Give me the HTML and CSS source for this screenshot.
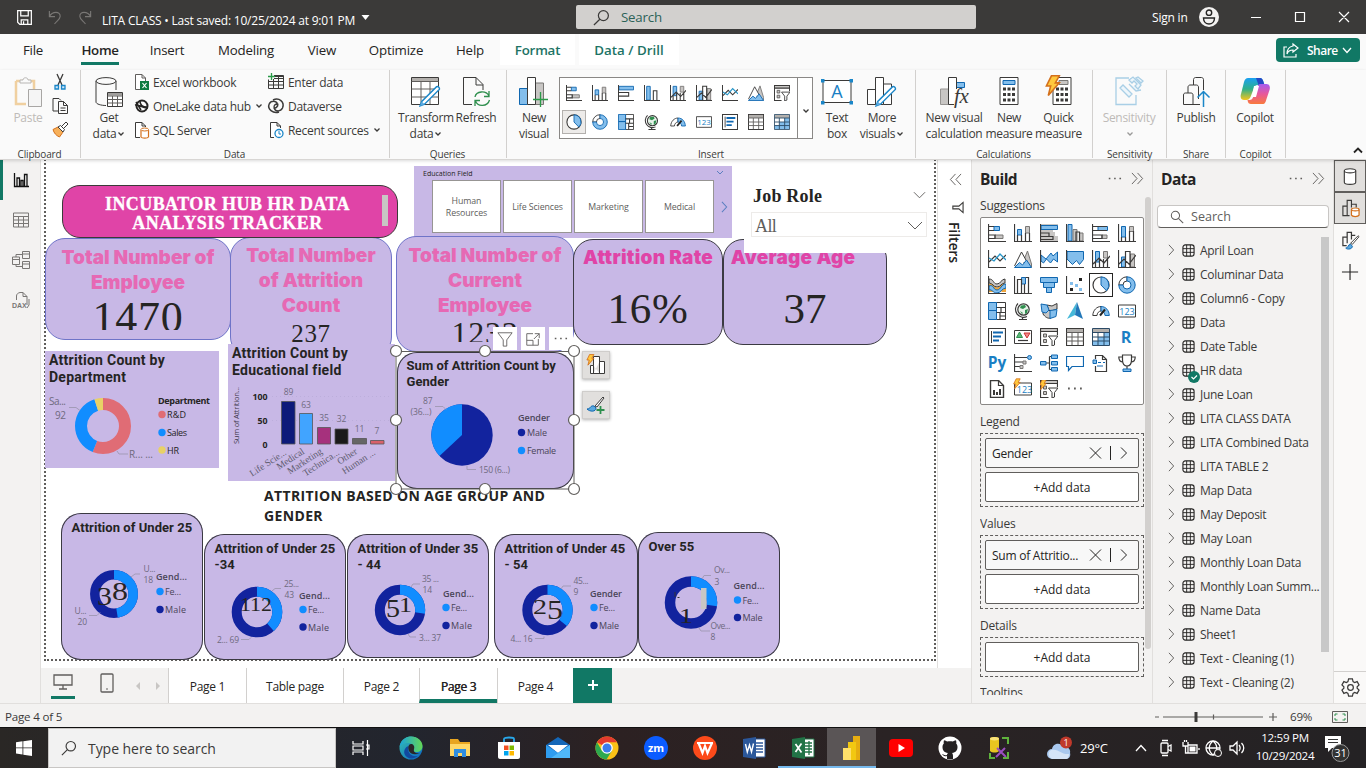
FILE: index.html
```html
<!DOCTYPE html>
<html lang="en">
<head>
<meta charset="utf-8">
<title>LITA CLASS</title>
<link rel="stylesheet" href="styles.css">
</head>
<body>
<svg class="defs" aria-hidden="true">
  <defs>
    <linearGradient id="cpA" x1="0" y1="0" x2="0" y2="1"><stop offset="0" stop-color="#1aa0f2"/><stop offset=".5" stop-color="#2fb08a"/><stop offset="1" stop-color="#f5c51c"/></linearGradient>
    <linearGradient id="cpB" x1="0" y1="0" x2="0" y2="1"><stop offset="0" stop-color="#a55bf0"/><stop offset=".5" stop-color="#e8589a"/><stop offset="1" stop-color="#f97a3c"/></linearGradient>
    <linearGradient id="edge" x1="0" y1="0" x2="1" y2="1"><stop offset="0" stop-color="#35c1b0"/><stop offset="1" stop-color="#0b62c4"/></linearGradient>
    <linearGradient id="edgeT" x1="0" y1="0" x2="1" y2="0"><stop offset="0" stop-color="#1aa2dc"/><stop offset="1" stop-color="#63d655"/></linearGradient>
  </defs>
  <symbol id="stackbar" viewBox="0 0 18 18"><path class="g" d="M7 11h8v3.500H7z"/><path class="b" d="M6 2.500h5.500v4H6z"/><path class="n" d="M.5 0v17.500H18M1 2.500h5M1 6.500h5M1 11h6v3.500H1"/></symbol>
  <symbol id="stackcol" viewBox="0 0 18 18"><path class="g" d="M11.500 2.500h4V9h-4z"/><path class="b" d="M3.500 5.500h4V11h-4z"/><path class="n" d="M.5 0v17.500H18M3.500 11v6M7.500 11v6M11.500 9v8M15.500 9v8"/></symbol>
  <symbol id="clubar" viewBox="0 0 18 18"><path class="b" d="M1 1.500h16.500v4H1z"/><path class="n" d="M.5 0v17.500H18M1 8.500h11v4H1"/></symbol>
  <symbol id="clucol" viewBox="0 0 18 18"><path class="b" d="M3 1.500h4V17H3z"/><path class="n" d="M.5 0v17.500H18M10.500 17V6.500h4V17"/></symbol>
  <symbol id="clubar2" viewBox="0 0 18 18"><path d="M0 0h18v5h-5v3h2v4h3v6H0z" fill="#c8c6c4"/><path class="b" d="M1 1.500h16.500v4H1z"/><path class="n" d="M.5 0v17.500H18M1 9h8v3.500H1M1 12.500h12v3H1"/></symbol>
  <symbol id="clucol2" viewBox="0 0 18 18"><path class="b" d="M2 .5h4V17H2z"/><path class="g" d="M7 5.500h4V17H7zM13.500 9h3.500v8h-3.500z"/><path class="n" d="M.5 0v17.500H18M10 17V8h3.500v9"/></symbol>
  <symbol id="hbar" viewBox="0 0 18 18"><path class="g" d="M10 11h5v3.500h-5z"/><path class="b" d="M6 2.500h9.500v4H6z"/><path class="n" d="M.5 0v17.500H18M1 2.500h14M1 6.500h14M1 11h9v3.500H1"/></symbol>
  <symbol id="hcol" viewBox="0 0 18 18"><path class="g" d="M11.500 2.500h4v5h-4z"/><path class="b" d="M3.500 2.500h4V13h-4z"/><path class="n" d="M.5 0v17.500H18M3.500 13v4M7.500 13v4M11.500 7v10M15.500 7v10"/></symbol>
  <symbol id="combo" viewBox="0 0 18 18"><path class="b" d="M3.500 1.500h4V12h-4z"/><path class="g" d="M11.500 1.500h4V8h-4z"/><path class="n" d="M.5 0v17.500H18M3.500 12v5M7.500 9v8M11.500 9v8M15.500 8v9M1 14l6-6 5 5 6-7"/></symbol>
  <symbol id="combo2" viewBox="0 0 18 18"><path class="b" d="M3.500 7h4v10h-4z"/><path class="g" d="M12.500 4h4v13h-4z"/><path class="n" d="M.5 0v17.500H18M7.500 17V1.500h4.500V17M1 14l5-5 5 5 7-9"/></symbol>
  <symbol id="line" viewBox="0 0 18 18"><path class="n" d="M.5 0v17.500H18M1 12l6-6 5 5 6-6"/><path d="M1 8l5 3 6-7 6 6" fill="none" stroke="#2796c8" stroke-width="1.300"/></symbol>
  <symbol id="area" viewBox="0 0 18 18"><path class="g" d="M9 12L13.500 1 17.500 14v3z"/><path d="M.5 16L7.500 2l5 9" fill="#fff" stroke="#3b3a39"/><path class="b" d="M.5 17.500l5-5 3 2.500 4-5 5 7.500z"/></symbol>
  <symbol id="sarea" viewBox="0 0 18 18"><path class="b" d="M1 5l5 4 5-6 2 3 4.500-4v10l-4-3-3 4-4-4-3 4-2.500-2z"/><path class="n" d="M.5 0v17.500H18"/></symbol>
  <symbol id="farea" viewBox="0 0 18 18"><path class="b" d="M1 1.500h16.500v8l-4 5-3-4-4 4L1 9z"/><path class="n" d="M.5 0v17.500H18"/></symbol>
  <symbol id="ribbon" viewBox="0 0 18 18"><path d="M1 8h4l4 4 4-4h5v8h-4l-3-2-3 2H1z" fill="#f0a63c"/><path class="b" d="M1 10c5-2 4 4 8 4s4-6 9-6v4c-4 0-5 5-9 5s-5-4-8-3z"/><path d="M1 3c5 0 4 5 8 5s4-5 8-5v4c-4 0-4 4-8 4S5 7 1 7z" fill="#c8c6c4" stroke="#3b3a39"/><path class="n" d="M.5 0v17.500H18"/></symbol>
  <symbol id="wfall" viewBox="0 0 18 18"><path class="b" d="M7.500 1.500h4V8h-4z"/><path class="n" d="M.5 0v17.500H18M3.500 17V3.500h4V17M11.500 1.500h3V17M10.500 17V8"/></symbol>
  <symbol id="funnel" viewBox="0 0 18 18"><path class="b" d="M.5 1.500h17v5H.5zM3.500 6.500h11v5h-11zM6.500 11.500h5v5h-5z"/></symbol>
  <symbol id="scatter" viewBox="0 0 18 18"><path class="n" d="M.5 0v17.500H18"/><path fill="#83beec" d="M4 6h3v3H4zM9 8h3v3H9zM13 12h3v3h-3z"/><path fill="#252423" d="M13 2h3v3h-3zM4 12h3v3H4z"/></symbol>
  <symbol id="pie" viewBox="0 0 18 18"><circle cx="9" cy="9" r="8" fill="#fff" stroke="#3b3a39" stroke-width="1.200"/><path class="b" d="M9 1a8 8 0 0 1 5.500 13.700L9 9z"/></symbol>
  <symbol id="donut" viewBox="0 0 18 18"><path d="M9 .8A8.200 8.200 0 0 0 .8 9H5a4 4 0 0 1 4-4z" fill="#fff" stroke="#3b3a39"/><path class="b" d="M9 .8A8.200 8.200 0 1 1 .8 9H5a4 4 0 1 0 4-4z"/></symbol>
  <symbol id="tree" viewBox="0 0 18 18"><path d="M8.500.5h9v17h-9z" fill="#fff" stroke="#3b3a39"/><path class="b" d="M.5.500h8v8h-8zM.5 8.500h8v9h-8z"/><path class="n" d="M8.500 5.500h9M8.500 10.500h9M13 5.500v5M12 10.500v7M12 14h5"/></symbol>
  <symbol id="globe" viewBox="0 0 18 18"><circle cx="9.500" cy="7.500" r="5.700" fill="#e8f3ea" stroke="#3b3a39" stroke-width="1.200"/><path d="M7 3.500l4-.5 1 2-3 2-3-1zM11 8l3-1-1 4-2 1zM6 9l3 2-1 1z" fill="#2f8f4e"/><path class="n" d="M4 1.500a8 8 0 0 0 9 13M8.500 15v2.500M5 17.500h8"/></symbol>
  <symbol id="map" viewBox="0 0 18 18"><path d="M7 3l5 1 5-2.500V7l-6 2-2 0z" fill="#c8c6c4" stroke="#3b3a39"/><path d="M3 9l5-1 3 1v7c-3 1-6-1-8-4z" fill="#c8c6c4" stroke="#3b3a39"/><path class="b" d="M1 2l6 1 2 5-3 3-4-1z"/><path class="b" d="M10 8.500l7-1-1 7-6 2z"/></symbol>
  <symbol id="arrow" viewBox="0 0 18 18"><path d="M11 0L1 17l8-4z" fill="#46b8d8"/><path d="M11 0l6 17-8-4z" fill="#2277b8"/></symbol>
  <symbol id="gauge" viewBox="0 0 18 18"><path d="M.8 13.500C1 8 5 4.500 9 4.500V9c-2 0-4 2-4 4.500z" fill="#fff" stroke="#3b3a39"/><path class="b" d="M9 4.500c5 0 8 4 8.300 9H13C13 11 11 9 9 9z"/><path d="M8 13.500l5-6" stroke="#252423" stroke-width="2"/></symbol>
  <symbol id="frame" viewBox="0 0 18 18"><path d="M.5 3h17v12H.5z" fill="#fff" stroke="#3b3a39"/></symbol>
  <symbol id="mrow" viewBox="0 0 18 18"><path d="M.5.500h17v17H.5z" fill="#fff" stroke="#3b3a39" stroke-width="1.200"/><path d="M3.500 3v12" stroke="#3b3a39"/><path d="M5 4.500h10M5 8.500h8M5 12.500h6" stroke="#1067b0" stroke-width="2"/></symbol>
  <symbol id="kpi" viewBox="0 0 18 18"><path d="M.5 2.500h17v13H.5z" fill="#fff" stroke="#3b3a39"/><path d="M2.500 9.500L5.500 4l3 5.500z" fill="#5cb878" stroke="#2f8f4e"/><path d="M10 5h6l-3 5z" fill="#f28b8b" stroke="#c33"/><path class="n" d="M4 12.500h10"/></symbol>
  <symbol id="slicer" viewBox="0 0 18 18"><path d="M.5.500h17v3H.5z" fill="#c8c6c4"/><path class="n" d="M.5.500h17v3H.5zM.5 4v13.500h8M17.500 4v3"/><path d="M3.500 6h3v3h-3zM3.500 11.500h3v3h-3z" fill="#c8c6c4" stroke="#605e5c"/><path d="M8.500 8h9.500l-3.500 4.500V17l-2.500 1v-5.500z" fill="#fff" stroke="#3b3a39"/></symbol>
  <symbol id="table" viewBox="0 0 18 18"><path d="M.5.500h17v17H.5z" fill="#fff" stroke="#3b3a39" stroke-width="1.200"/><path d="M1 1h16v3.500H1z" fill="#b3b0ad"/><path d="M.5 4.500h17M.5 9h17M.5 13h17M6 4.500V17M12 4.500V17" stroke="#605e5c" fill="none"/></symbol>
  <symbol id="matrix" viewBox="0 0 18 18"><path d="M.5.500h17v17H.5z" fill="#fff"/><path d="M1 13h16v4H1zM12 4.500h5V13h-5zM6 9h6v4H6z" fill="#83beec"/><path d="M1 1h16v3.500H1z" fill="#b3b0ad"/><path d="M.5.500h17v17H.5zM.5 4.500h17M.5 9h17M.5 13h17M6 4.500V17M12 4.500V17" stroke="#2b4a66" fill="none"/></symbol>
  <symbol id="infl" viewBox="0 0 18 18"><path class="n" d="M.5 0v17.500H18M1 3.500h12M1 8h8M1 12.500h5"/><circle cx="15.500" cy="3.500" r="2" class="b"/><path class="g" d="M9 7h3v3H9zM6 11.500h3v3H6z"/></symbol>
  <symbol id="decomp" viewBox="0 0 18 18"><path class="n" d="M6 9h4M9.500 2.500v13M9.500 2.500h2M9.500 15.500h2"/><path class="b" d="M.5 7.500h5.500v3.500H.5zM11.500 1h6v3.500h-6zM11.500 7.500h6v3.500h-6zM11.500 13.500h6V17h-6z"/></symbol>
  <symbol id="qa" viewBox="0 0 18 18"><path d="M.5 2.500h17v10H6L2.500 16.500v-4h-2z" fill="#fff" stroke="#1067b0" stroke-width="1.200"/></symbol>
  <symbol id="narr" viewBox="0 0 18 18"><path class="n" d="M3.500 5V1.500h7l4 4v12h-11V12M10.500 1.500v4h4"/><path class="b" d="M1 6h3.500v3.500H1z"/><path d="M6 8.500h3M5 12h6M11 8.500h2" stroke="#1067b0"/></symbol>
  <symbol id="trophy" viewBox="0 0 18 18"><path class="n" d="M4.500 1h9v5c0 4-2 6-4.500 6S4.500 10 4.500 6zM4.500 3H.8c0 4 1.700 5 4.200 5M13.500 3h3.700c0 4-1.700 5-4.200 5M9 12v3"/><path class="b" d="M5 15h8v2.500H5z"/></symbol>
  <symbol id="report" viewBox="0 0 18 18"><path d="M2.500.500h8l5 5v12h-13z" fill="#fff" stroke="#3b3a39" stroke-width="1.400"/><path d="M10.500.500v5h5" class="n"/><path d="M6 10v5M9 12v3M12 9v6" stroke="#3b3a39" stroke-width="2"/></symbol>
  <symbol id="bolt" viewBox="0 0 10 14"><path d="M4 .5h5L6.500 5H9L2 13l1.500-6H.8z" fill="#ffc83d" stroke="#d4701c"/></symbol>
  <symbol id="slicer-n" viewBox="0 0 18 18"><use href="#slicer"/><use href="#bolt" x="-1" y="-1" width="8" height="12"/></symbol>
  <symbol id="dots" viewBox="0 0 18 18"><path d="M2 8.500h1.800M8 8.500h1.800M14 8.500h1.800" stroke="#605e5c" stroke-width="1.800"/></symbol>
  <symbol id="dn" viewBox="0 0 8 8"><path d="M1.500 2.500L4 5l2.500-2.500" fill="none" stroke="#3b3a39" stroke-width="1.300"/></symbol>
  <symbol id="chev" viewBox="0 0 8 14"><path d="M1 1l5.500 6L1 13" fill="none" stroke="#605e5c" stroke-width="1.100"/></symbol>
  <symbol id="dbl" viewBox="0 0 14 14"><path d="M1 1l5.500 6L1 13M7 1l5.500 6L7 13" fill="none" stroke="#605e5c"/></symbol>
  <symbol id="tbl" viewBox="0 0 14 14"><rect x="1" y="1" width="12" height="12" rx="2.500" fill="none" stroke="#252423" stroke-width="1.200"/><path d="M1 5h12M1 9h12M5 1v12M9 1v12" stroke="#252423" fill="none"/></symbol>
  <symbol id="glass" viewBox="0 0 18 18"><circle cx="11" cy="7" r="5.300" fill="none" stroke="currentColor" stroke-width="1.300"/><path d="M7.200 10.800L1 17" stroke="currentColor" stroke-width="1.300"/></symbol>
  <symbol id="pencil" viewBox="0 0 20 20"><path d="M16 1.500a2 2 0 0 1 2.500 2.500L5 17.500 1 19l1.500-4z" fill="#fff" stroke="#1a86c8" stroke-width="1.300"/><path d="M2.500 15L5 17.500 1 19z" fill="#5aa9e0"/></symbol>
</svg>

<header class="titlebar">
  <svg class="i-save" viewBox="0 0 16 16"><path d="M.7.700h14.600v14.600H3L.7 13zM4 .7v5.500h8V.7M4.500 15v-4.500h7V15M7 12v3" fill="none" stroke="#fff" stroke-width="1.300"/></svg>
  <svg class="i-undo" viewBox="0 0 14 16"><path d="M1 1v6h6M1 7C4 1 13 1 12.500 7c0 3-4 5-6 8" fill="none" stroke="#797775" stroke-width="1.200"/></svg>
  <svg class="i-redo" viewBox="0 0 14 16"><path d="M13 1v6H7M13 7C10 1 1 1 1.500 7c0 3 4 5 6 8" fill="none" stroke="#797775" stroke-width="1.200"/></svg>
  <span class="doc">LITA CLASS • Last saved: 10/25/2024 at 9:01 PM</span>
  <svg class="i-tri" viewBox="0 0 8 5"><path d="M0 0h8L4 5z" fill="#fff"/></svg>
  <div class="topsearch"><svg viewBox="0 0 18 18"><use href="#glass"/></svg><span>Search</span></div>
  <span class="signin">Sign in</span>
  <svg class="i-user" viewBox="0 0 20 20"><circle cx="10" cy="10" r="10" fill="#f3f2f1"/><circle cx="10" cy="5.700" r="2.700" fill="none" stroke="#252423" stroke-width="1.400"/><path d="M4.500 11h11c0 8-11 8-11 0z" fill="none" stroke="#252423" stroke-width="1.400"/></svg>
  <svg class="i-win" viewBox="0 0 100 12"><path d="M1 6.500h10M45.500 1.500h9v9h-9zM89 1l10 10M99 1L89 11" fill="none" stroke="#fff" stroke-width="1.200"/></svg>
</header>

<nav class="tabs">
  <span class="tab file">File</span><span class="tab home">Home</span><span class="tab insert">Insert</span><span class="tab modeling">Modeling</span><span class="tab view">View</span><span class="tab optimize">Optimize</span><span class="tab help">Help</span><span class="tab ctx format">Format</span><span class="tab ctx drill">Data / Drill</span>
  <button class="share"><svg class="i-share" viewBox="0 0 16 15"><path d="M4 4H1v10h12v-3M10 1l5 4-5 4V7C7 7 5 8 4 11c0-5 3-7.500 6-8z" fill="none" stroke="#fff" stroke-width="1.200"/></svg><span>Share</span><svg class="i-sdn" viewBox="0 0 10 7"><path d="M1 1l4 4.500L9 1" fill="none" stroke="#fff" stroke-width="1.300"/></svg></button>
</nav>

<section class="ribbon">
  <div class="group clip">
    <div class="row">
      <div class="big w50 off"><svg class="ic" viewBox="0 0 28 30"><path d="M2 4h18v8M12 27H2V4" fill="none" stroke="#f0d0a0" stroke-width="2.500"/><path d="M6 6V3h3c0-3 5-3 5 0h3v3z" fill="#fafafa" stroke="#b8b6b4"/><path d="M14.500 12.500h13v17h-13z" fill="#f5f5f5" stroke="#a8a6a4"/></svg><span>Paste</span></div>
      <div class="minis">
        <svg viewBox="0 0 16 18"><path d="M5 1l5 11M11 1L6 12" stroke="#3b3a39" fill="none" stroke-width="1.300"/><path d="M3 12.500h3.500V16H3zM9.500 12.500H13V16H9.500z" fill="#cfe6f8" stroke="#1a86c8" stroke-width="1.300"/></svg>
        <svg viewBox="0 0 16 18"><path d="M6 14H1V1.500h6l2 2M6.500 4.500h5l4 4v8h-9zM11.500 4.500v4h4M8.500 11h5M8.500 13.500h5" fill="none" stroke="#3b3a39"/></svg>
        <svg viewBox="0 0 16 18"><path d="M1 8.500l5-2.500 5 5-3.500 5C4 14.500 2 12 1 8.500z" fill="#f7b05a" stroke="#d4701c"/><path d="M6 6l2.500-1.500 4 4L11 11zM9.500 5.500L14 1l2 2-4.500 4.500" fill="#fff" stroke="#3b3a39"/></svg>
      </div>
    </div><label>Clipboard</label>
  </div>
  <div class="group data">
    <div class="row">
      <div class="big w50"><svg class="ic" viewBox="0 0 28 30"><path d="M1 4v21c0 2 5 3.500 10 3.500M21 4v9" stroke="#3b3a39" fill="none"/><ellipse cx="11" cy="4" rx="10" ry="3.400" fill="#fafafa" stroke="#3b3a39"/><path d="M12.500 15.500h15v14h-15z" fill="#fff" stroke="#3b3a39"/><path d="M13 16h14v2.500H13z" fill="#a19f9d"/><path d="M12.500 19h15M12.500 22.500h15M12.500 26h15M17.500 19v10M22.500 19v10" stroke="#605e5c" fill="none"/></svg><span>Get<br>data<svg class="dn"><use href="#dn"/></svg></span></div>
      <div class="links l1">
        <div><svg viewBox="0 0 16 18"><path d="M6 16.500H1.500v-15H8l3.500 3.500v3M8 1.500V5h3.500" fill="#fff" stroke="#605e5c"/><path d="M6 8h9v9H6z" fill="#107c41"/><path d="M8.500 10l4 5M12.500 10l-4 5" stroke="#fff" stroke-width="1.200"/></svg>Excel workbook</div>
        <div><svg viewBox="0 0 16 18"><circle cx="8" cy="9" r="5.500" fill="none" stroke="#252423" stroke-width="2"/><path d="M1 8c4-1 6 3 13 3M6 4c0 4 3 6 7 6M2 5l5 8" stroke="#252423" fill="none" stroke-width="1.500"/></svg>OneLake data hub<svg class="dn"><use href="#dn"/></svg></div>
        <div><svg viewBox="0 0 16 18"><path d="M6 16.500H1.500v-15H8l3.500 3.500v1M8 1.500V5h3.500" fill="#fff" stroke="#3b3a39"/><path d="M7 9v7c1 1.500 6.500 1.500 7.500 0V9" fill="#fff" stroke="#d4701c" stroke-width="1.200"/><ellipse cx="10.700" cy="8.500" rx="3.800" ry="1.500" fill="#fff" stroke="#d4701c"/></svg>SQL Server</div>
      </div>
      <div class="links l2">
        <div><svg viewBox="0 0 16 18"><path d="M6 2.500h9.500v13H.5v-9M6 3.500h9M.5 8.500h15M.5 12h15M5.500 6v10M10.500 4v12M6 5.500h9.500" fill="none" stroke="#3b3a39"/><path d="M3.500 0v7M0 3.500h7" stroke="#2a9a48" stroke-width="1.300"/></svg>Enter data</div>
        <div><svg viewBox="0 0 16 18"><path d="M11 15C5 17-1 12 1.200 7 3 3 8 3.500 9.300 6.500 10.500 9 8 12 5.500 10.500M5 3c6-3 12 2 9.500 8-2 4-7 3.500-8.200.5C5 8.500 8 6 10.500 7.500" fill="none" stroke="#3b3a39" stroke-width="1.500"/></svg>Dataverse</div>
        <div><svg viewBox="0 0 16 18"><path d="M6 16.500H2.500v-15H9l3.500 3.500v2M9 1.500V5h3.500" fill="#fff" stroke="#3b3a39"/><circle cx="11" cy="12.500" r="4" fill="#fff" stroke="#1a86c8" stroke-width="1.300"/><path d="M11 10v3h2" fill="none" stroke="#1a86c8"/></svg>Recent sources<svg class="dn"><use href="#dn"/></svg></div>
      </div>
    </div><label>Data</label>
  </div>
  <div class="group queries">
    <div class="row">
      <div class="big w60"><svg class="ic w30" viewBox="0 0 30 30"><path d="M.5.500h27v27H.5z" fill="#fff" stroke="#3b3a39"/><path d="M1 1h26v3.500H1z" fill="#b3b0ad"/><path d="M.5 4.500h27M.5 12h27M.5 20h27M10 5v22M19 5v22" stroke="#605e5c" fill="none"/><use href="#pencil" x="8" y="8" width="22" height="22"/></svg><span>Transform<br>data<svg class="dn"><use href="#dn"/></svg></span></div>
      <div class="big w40"><svg class="ic" viewBox="0 0 28 30"><path d="M10 27.500H1.500V.5H14l7 7V13M14 .5V8h7" fill="none" stroke="#3b3a39"/><path d="M13 20c1-6 11-7 14-1M27 14v5.500h-5M27.500 23c-2 7-12 7-14 1M13 29v-5.500h5" fill="none" stroke="#2f8f4e" stroke-width="1.300"/></svg><span>Refresh</span></div>
    </div><label>Queries</label>
  </div>
  <div class="group ins">
    <div class="row">
      <div class="big w40"><svg class="ic w30" viewBox="0 0 30 30"><path class="b" d="M.5 11.500h8v16h-8z"/><path class="g" d="M16.500 6h8v21.500h-8z"/><path d="M8.500.5h8v27h-8z" fill="#fff" stroke="#3b3a39"/><path d="M21.500 15v15M14 22.500h15" stroke="#2a9a48" stroke-width="1.300"/></svg><span>New<br>visual</span></div>
      <div class="gallery">
        <div class="ggrid">
          <i><svg><use href="#stackbar"/></svg></i><i><svg><use href="#stackcol"/></svg></i><i><svg><use href="#clubar"/></svg></i><i><svg><use href="#clucol"/></svg></i><i><svg><use href="#combo"/></svg></i><i><svg><use href="#combo2"/></svg></i><i><svg><use href="#line"/></svg></i><i><svg><use href="#area"/></svg></i><i><svg><use href="#slicer"/></svg></i>
          <i class="sel"><svg><use href="#pie"/></svg></i><i><svg><use href="#donut"/></svg></i><i><svg><use href="#tree"/></svg></i><i><svg><use href="#globe"/></svg></i><i><svg><use href="#gauge"/></svg></i><i><svg viewBox="0 0 18 18"><use href="#frame"/><text x="9" y="12.500" text-anchor="middle" font-size="9" class="t123">123</text></svg></i><i><svg><use href="#mrow"/></svg></i><i><svg><use href="#table"/></svg></i><i><svg><use href="#matrix"/></svg></i>
        </div>
        <div class="gdn"><svg class="dn"><use href="#dn"/></svg></div>
      </div>
      <div class="big w40 tbx"><svg class="ic w32" viewBox="0 0 32 30"><path d="M2 3.500h28v22H2z" fill="#fff" stroke="#3b3a39"/><path d="M0 2h3.500v3.500H0zM28.500 2H32v3.500h-3.500zM0 24h3.500v3.500H0zM28.500 24H32v3.500h-3.500z" fill="#1a86c8"/><text x="16" y="21" font-size="18" text-anchor="middle" class="t123">A</text></svg><span>Text<br>box</span></div>
      <div class="big w50"><svg class="ic w30" viewBox="0 0 30 30"><path d="M.5 12.500h8v15h-8zM16.500 7h8v20.500h-8z" fill="#fff" stroke="#3b3a39"/><path d="M8.500.5h8v27h-8z" fill="#fff" stroke="#3b3a39"/><use href="#pencil" x="8" y="8" width="22" height="22"/></svg><span>More<br>visuals<svg class="dn"><use href="#dn"/></svg></span></div>
    </div><label>Insert</label>
  </div>
  <div class="group calc">
    <div class="row">
      <div class="big w60"><svg class="ic w30" viewBox="0 0 30 30"><path d="M1.500 12h8v15.500h-8z" fill="#c8c6c4" stroke="#979593"/><path class="b" d="M17.500 5.500h8v5h-8z"/><path d="M15 27.500H9.500V.5h8V12" fill="#fff" stroke="#3b3a39"/><text x="15" y="26" font-size="21" font-style="italic" class="fx">fx</text></svg><span>New visual<br>calculation</span></div>
      <div class="big w50"><svg class="ic" viewBox="0 0 28 30"><path d="M5 .5h18v27H5z" fill="#fff" stroke="#3b3a39"/><path class="b" d="M8 3.500h12v4H8z"/><path d="M8 12h12M8 17.500h12M8 23h12" stroke="#3b3a39" stroke-width="3" stroke-dasharray="3 1.500"/></svg><span>New<br>measure</span></div>
      <div class="big w49"><svg class="ic" viewBox="0 0 28 30"><path d="M8 .5h18v27H8z" fill="#fff" stroke="#3b3a39"/><path class="g" d="M14 3.500h9v4h-9z"/><path d="M11 12h12M11 17.500h12M11 23h12" stroke="#3b3a39" stroke-width="3" stroke-dasharray="3 1.500"/><use href="#bolt" x="0" y="-2" width="16" height="22"/></svg><span>Quick<br>measure</span></div>
    </div><label>Calculations</label>
  </div>
  <div class="group sens">
    <div class="row"><div class="big w72 off"><svg class="ic" viewBox="0 0 28 30"><path d="M14 1H1v26.500h20V18" fill="none" stroke="#a9cfe6" stroke-width="1.300"/><path d="M5 11l3-3 9 9-3 3zM14 7l7 7 5-1M14 3l4-3 8 8-3 4-3-3 2-2-3-3-2 2zM21 1l5 5 2-2-5-4z" fill="#eef6fb" stroke="#a9cfe6" stroke-width="1.300"/></svg><span>Sensitivity<br><svg class="dn"><use href="#dn"/></svg></span></div></div><label>Sensitivity</label>
  </div>
  <div class="group pub">
    <div class="row"><div class="big w58"><svg class="ic" viewBox="0 0 28 30"><path d="M18 27.500H1.500V18c0-1.500 1-2 2-2H6V10c0-1 1-2 2-2h3.500V2.500c0-1 1-2 2-2h6c1 0 2 1 2 2V13M6 16h3c1.500 0 2 1 2 2v9.500M11.500 8h3c1 0 2 1 2 2v12" fill="none" stroke="#3b3a39"/><path d="M21.500 30V15M15.500 20.500l6-6 6 6" fill="none" stroke="#1a86c8" stroke-width="1.500"/></svg><span>Publish</span></div></div><label>Share</label>
  </div>
  <div class="group cop">
    <div class="row"><div class="big w58"><svg class="ic w30" viewBox="0 0 30 30"><path d="M8 1h12c2 0 3 2 3.500 4l1 3h-7c-2 0-3 1-4 4l-3 8c-1 2-2 3-4 3H4c-3 0-4-3-3-6L4 5c1-3 2-4 4-4z" fill="url(#cpA)"/><path d="M16 1h4c2 0 3 2 3.500 4l1 3h-6z" fill="#2449c4"/><path d="M23 27H11c-2 0-3-1-3.500-4h2c2 0 3-1 4-4l3-8c1-2 2-4 4-4h6c3 0 4 3 3 6L26.500 22c-1 4-2 5-3.500 5z" fill="url(#cpB)"/><path d="M14 9h5l-3 11h-4z" fill="#fff"/></svg><span>Copilot</span></div></div><label>Copilot</label>
  </div>
  <svg class="collapse" viewBox="0 0 10 7"><path d="M1 5.500L5 1.500l4 4" fill="none" stroke="#252423" stroke-width="1.800"/></svg>
</section>

<main class="main">
  <aside class="rail">
    <div class="on"><svg viewBox="0 0 18 18"><path d="M2.500 2v13.500H17M5 15V7h2.500v8M9 15V9.500h2V15M12.500 15V3.500H15V15" fill="none" stroke="#111" stroke-width="1.300"/></svg></div>
    <div><svg viewBox="0 0 18 18"><path d="M1.500 2h15v14h-15zM1.500 5.500h15M1.500 9h15M1.500 12.500h15M6.500 5.500V16M11.500 5.500V16" fill="none" stroke="#797775"/></svg></div>
    <div><svg viewBox="0 0 18 18"><path d="M.5 6h7v7.500h-7zM.5 8.500h7M10.500.5h7v7h-7zM10.500 3h7M10.500 10.500h7v7h-7zM10.500 13h7M4 6V3.500h6.500M4 13.500v2h6.500" fill="none" stroke="#797775"/></svg></div>
    <div><svg viewBox="0 0 18 18"><path d="M4.500 9V5C4.500 3 6 2 8 1.500h3l4 4V14M11 1.500v4h4M17 8v6l-2 3" fill="none" stroke="#797775"/><text x="0" y="16.500" font-size="7" font-weight="700" class="dax">DAX</text></svg></div>
  </aside>

  <div class="work">
    <div class="canvas">
      <div class="page"></div>
      <div class="v kpi k1"><h3>Total Number of<br>Employee</h3><b>1470</b></div>
      <div class="v kpi k2"><h3>Total Number<br>of Attrition<br>Count</h3><b>237</b></div>
      <div class="v title">INCUBATOR HUB HR DATA<br>ANALYSIS TRACKER<i></i></div>
      <div class="v edu"><div class="eh"><span>Education Field</span><svg viewBox="0 0 8 6"><path d="M1 1l3 3 3-3" fill="none" stroke="#5b7fc0"/></svg></div><div class="tiles"><span>Human Resources</span><span>Life Sciences</span><span>Marketing</span><span>Medical</span></div><svg class="next" viewBox="0 0 8 14"><path d="M1 1l5.500 6L1 13" fill="none" stroke="#5b7fc0" stroke-width="1.200"/></svg></div>
      <div class="v kpi k3"><h3>Total Number of<br>Current<br>Employee</h3><b>1233</b></div>
      <div class="v kpi dark k4"><h3>Attrition Rate</h3><b>16%</b></div>
      <div class="v kpi dark k5"><h3>Average Age</h3><b>37</b></div>
      <div class="v role"><div class="rh"><strong>Job Role</strong><svg viewBox="0 0 14 8"><path d="M1 1l6 6 6-6" fill="none" stroke="#605e5c"/></svg></div><div class="rs"><span>All</span><svg viewBox="0 0 16 9"><path d="M1 1l7 7 7-7" fill="none" stroke="#605e5c"/></svg></div></div>

      <div class="v chart dept"><h4>Attrition Count by<br>Department</h4>
        <svg viewBox="45 351 174 117"><g transform="rotate(-90 103 426)" fill="none" stroke-width="12"><circle cx="103" cy="426" r="22" stroke="#e06c75" pathLength="100" stroke-dasharray="56 100"/><circle cx="103" cy="426" r="22" stroke="#118dff" pathLength="100" stroke-dasharray="39 100" stroke-dashoffset="-56"/><circle cx="103" cy="426" r="22" stroke="#e8d166" pathLength="100" stroke-dasharray="5 100" stroke-dashoffset="-95"/></g>
          <path d="M69 407.500h7l4 3M117 451l2 3h9" fill="none" stroke="#a39bb8"/>
          <g class="lab"><text x="49" y="405" font-size="10" textLength="17">Sa...</text><text x="55" y="419" font-size="10" textLength="11">92</text><text x="129" y="458" font-size="10" textLength="24">R... ...</text></g>
          <text x="158" y="404" font-size="10" class="lgb k" textLength="52">Department</text>
          <circle cx="162" cy="414.500" r="3.700" fill="#e06c75"/><circle cx="162" cy="432.500" r="3.700" fill="#118dff"/><circle cx="162" cy="450" r="3.700" fill="#e8d166"/>
          <g class="lg k"><text x="167" y="418" textLength="19">R&amp;D</text><text x="167" y="436" textLength="20">Sales</text><text x="167" y="454" textLength="12">HR</text></g></svg></div>

      <div class="v chart field"><h4>Attrition Count by<br>Educational field</h4>
        <svg viewBox="228 344 167 137"><path d="M272 396.500h118M272 420.500h118" stroke="#bcaedb" stroke-dasharray="1 3"/>
          <g stroke="#555" stroke-width=".8"><path d="M281.500 401.500h13.500V444h-13.500z" fill="#0d1a7a"/><path d="M299.500 413.500h13V444h-13z" fill="#41a4ff"/><path d="M317.500 427.500h13V444h-13z" fill="#a6317d"/><path d="M335 429h13v15h-13z" fill="#1a1a1a"/><path d="M352.500 438.500h14v5.500h-14z" fill="#666"/><path d="M370.500 440.500h13.500v3.500h-13.500z" fill="#d9616b"/></g>
          <g class="lab mid" font-size="8.500"><text x="288.500" y="395">89</text><text x="306" y="407.500">63</text><text x="324" y="420.500">35</text><text x="341.500" y="422">32</text><text x="359.500" y="432">11</text><text x="377" y="434">7</text></g>
          <g class="ax"><text x="267.500" y="399.500">100</text><text x="267.500" y="423.500">50</text><text x="267.500" y="447.500">0</text></g>
          <text transform="translate(238.500 444) rotate(-90)" class="lab dk" font-size="7.500" textLength="57">Sum of Attrition...</text>
          <g class="cat"><text transform="translate(287 454) rotate(-33)">Life Scie...</text><text transform="translate(305 453) rotate(-33)">Medical</text><text transform="translate(323 453) rotate(-33)">Marketing</text><text transform="translate(340 454) rotate(-33)">Technica...</text><text transform="translate(358 453) rotate(-33)">Other</text><text transform="translate(376 454) rotate(-33)">Human ...</text></g></svg></div>

      <div class="v heading">ATTRITION BASED ON AGE GROUP AND<br>GENDER</div>

      <div class="v chart round gender"><h4>Sum of Attrition Count by<br>Gender</h4>
        <svg viewBox="397 352 177 137"><circle cx="462" cy="435" r="30.700" fill="#12239e"/><path d="M462 435V404.300A30.700 30.700 0 0 0 439.500 455.900z" fill="#118dff"/><path d="M435 406.500h8l3 3M467 466v3.500h9" fill="none" stroke="#a39bb8"/>
          <g class="lab" font-size="8.500"><text x="423" y="404">87</text><text x="410.500" y="415" textLength="21">(36...)</text><text x="479" y="473" textLength="31">150 (6...)</text></g>
          <text x="518" y="421" class="lgb" textLength="32">Gender</text><circle cx="521.500" cy="432.500" r="3.700" fill="#12239e"/><circle cx="521.500" cy="450.500" r="3.700" fill="#118dff"/>
          <g class="lg"><text x="527" y="436" textLength="20">Male</text><text x="527" y="454" textLength="29">Female</text></g></svg></div>

      <div class="v chart round a1"><h4>Attrition of Under 25</h4>
        <svg viewBox="61 513 142 147"><g transform="rotate(-90 114 594)" fill="none" stroke-width="9.500"><circle cx="114" cy="594" r="19.200" stroke="#12239e"/><circle cx="114" cy="594" r="19.200" stroke="#118dff" pathLength="100" stroke-dasharray="47.400 100"/></g><path d="M131 577l4-3h5M89 615.500h8l3-3" fill="none" stroke="#a39bb8"/>
          <g class="old" font-size="26"><text x="97" y="605" textLength="15" lengthAdjust="spacingAndGlyphs">3</text><text x="112" y="600" textLength="16" lengthAdjust="spacingAndGlyphs">8</text></g>
          <g class="lab" font-size="8.500"><text x="143.500" y="572" textLength="12">U...</text><text x="143.500" y="583">18</text><text x="74.500" y="614" textLength="12">U...</text><text x="77.500" y="625">20</text></g>
          <text x="156" y="580" class="lgb" textLength="31">Gend...</text><circle cx="160" cy="591.500" r="3.700" fill="#118dff"/><circle cx="160" cy="609.500" r="3.700" fill="#12239e"/><g class="lg"><text x="165" y="595" textLength="16">Fe...</text><text x="165" y="613" textLength="21">Male</text></g></svg></div>

      <div class="v chart round a2"><h4>Attrition of Under 25<br>-34</h4>
        <svg viewBox="204 534 142 126"><g transform="rotate(-90 257 612)" fill="none" stroke-width="10"><circle cx="257" cy="612" r="20.300" stroke="#12239e"/><circle cx="257" cy="612" r="20.300" stroke="#118dff" pathLength="100" stroke-dasharray="38.400 100"/></g><path d="M272 591l3-2.500h6M241 639.500h8l2-2" fill="none" stroke="#a39bb8"/>
          <text x="240" y="611" font-size="18" class="old" textLength="32" lengthAdjust="spacingAndGlyphs">112</text>
          <g class="lab" font-size="8.500"><text x="284" y="587" textLength="15">25...</text><text x="284.500" y="598">43</text><text x="217" y="643" textLength="22">2... 69</text></g>
          <text x="299" y="599" class="lgb" textLength="31">Gend...</text><circle cx="303" cy="609.500" r="3.700" fill="#118dff"/><circle cx="303" cy="627" r="3.700" fill="#12239e"/><g class="lg"><text x="308" y="613" textLength="16">Fe...</text><text x="308" y="631" textLength="21">Male</text></g></svg></div>

      <div class="v chart round a3"><h4>Attrition of Under 35<br>- 44</h4>
        <svg viewBox="347 534 142 124"><g transform="rotate(-90 400 610)" fill="none" stroke-width="10"><circle cx="400" cy="610" r="20.200" stroke="#12239e"/><circle cx="400" cy="610" r="20.200" stroke="#118dff" pathLength="100" stroke-dasharray="27.400 100"/></g><path d="M411 587l2-3h7M408 634l2 3h6" fill="none" stroke="#a39bb8"/>
          <g class="old"><text x="386" y="617" font-size="26" textLength="14" lengthAdjust="spacingAndGlyphs">5</text><text x="399" y="612" font-size="20" textLength="13" lengthAdjust="spacingAndGlyphs">1</text></g>
          <g class="lab" font-size="8.500"><text x="422" y="582" textLength="17">35 ...</text><text x="422.500" y="593">14</text><text x="419" y="641" textLength="22">3... 37</text></g>
          <text x="443" y="597" class="lgb" textLength="31">Gend...</text><circle cx="446" cy="607.500" r="3.700" fill="#118dff"/><circle cx="446" cy="625.500" r="3.700" fill="#12239e"/><g class="lg"><text x="451" y="611" textLength="16">Fe...</text><text x="451" y="629" textLength="21">Male</text></g></svg></div>

      <div class="v chart round a4"><h4>Attrition of Under 45<br>- 54</h4>
        <svg viewBox="494 534 144 124"><g transform="rotate(-90 547.500 610)" fill="none" stroke-width="10"><circle cx="547.500" cy="610" r="20.200" stroke="#12239e"/><circle cx="547.500" cy="610" r="20.200" stroke="#118dff" pathLength="100" stroke-dasharray="36 100"/></g><path d="M561 589l2-3h8M535 638.500h9v-2" fill="none" stroke="#a39bb8"/>
          <g class="old"><text x="533" y="614" font-size="21" textLength="14" lengthAdjust="spacingAndGlyphs">2</text><text x="547" y="619" font-size="27" textLength="16" lengthAdjust="spacingAndGlyphs">5</text></g>
          <g class="lab" font-size="8.500"><text x="573.500" y="584" textLength="15">45...</text><text x="573.500" y="595">9</text><text x="510.500" y="642" textLength="22">4... 16</text></g>
          <text x="590" y="597" class="lgb" textLength="32">Gender</text><circle cx="594" cy="607.500" r="3.700" fill="#118dff"/><circle cx="594" cy="625.500" r="3.700" fill="#12239e"/><g class="lg"><text x="599" y="611" textLength="16">Fe...</text><text x="599" y="629" textLength="20">Male</text></g></svg></div>

      <div class="v chart round a5"><h4>Over 55</h4>
        <svg viewBox="638 532 142 126"><g transform="rotate(-90 691 602.500)" fill="none" stroke-width="10.500"><circle cx="691" cy="602.500" r="21" stroke="#12239e"/><circle cx="691" cy="602.500" r="21" stroke="#118dff" pathLength="100" stroke-dasharray="27.300 100"/></g><path d="M702 579l2-3.500h7M699 628l2 3h9" fill="none" stroke="#a39bb8"/>
          <path d="M701 588h5.500v21h-5.500z" fill="#c8c6c4"/><path d="M675 592v5M677.500 597.500h2" stroke="#333"/>
          <text x="679" y="623" font-size="20" class="old" textLength="14" lengthAdjust="spacingAndGlyphs">1</text>
          <g class="lab" font-size="8.500"><text x="714" y="573" textLength="16">Ov...</text><text x="714.500" y="585">3</text><text x="710.500" y="629" textLength="20">Ove...</text><text x="710.500" y="640">8</text></g>
          <text x="733.500" y="589" class="lgb" textLength="31">Gend...</text><circle cx="737.500" cy="600" r="3.700" fill="#118dff"/><circle cx="737.500" cy="617.500" r="3.700" fill="#12239e"/><g class="lg"><text x="742.500" y="604" textLength="16">Fe...</text><text x="742.500" y="621" textLength="20">Male</text></g></svg></div>

      <div class="v vtools"><span><svg viewBox="0 0 18 18"><path d="M1 2h16l-6 8v7H7v-7z" fill="none" stroke="#605e5c"/></svg></span><span><svg viewBox="0 0 18 18"><path d="M9 3H2v13h13V9M2 10.500h7V16M11 3h5v5M16 3l-6 6" fill="none" stroke="#605e5c"/></svg></span><span><svg viewBox="0 0 18 18"><use href="#dots"/></svg></span></div>
      <svg class="v selbox" viewBox="390 345 190 150"><path d="M396 351.500h178V489H396z" fill="none" stroke="#605e5c"/><g fill="#fff" stroke="#605e5c" stroke-width="1.200"><circle cx="396" cy="351" r="5.500"/><circle cx="485" cy="351" r="5.500"/><circle cx="574" cy="351" r="5.500"/><circle cx="396" cy="420" r="5.500"/><circle cx="574" cy="420" r="5.500"/><circle cx="396" cy="489" r="5.500"/><circle cx="485" cy="489" r="5.500"/><circle cx="574" cy="489" r="5.500"/></g></svg>
      <div class="v obj o1"><svg viewBox="0 0 20 20"><path d="M7.500 18.500v-8h-3v8h14v-12h-5M7.500 10.500V1.500h6v17" fill="#fff" stroke="#3b3a39"/><use href="#bolt" x="0" y="-1" width="9" height="12"/></svg></div>
      <div class="v obj o2"><svg viewBox="0 0 20 20"><path d="M9 11L17 2l1 1-7 9z" fill="#fff" stroke="#3b3a39"/><path d="M1 14c4 0 3-4 7-3l2 2c0 4-6 4-9 1z" fill="#5aa9e0" stroke="#1067b0"/><path d="M14.500 11v8M10.500 15h8" stroke="#2f8f4e" stroke-width="1.800"/></svg></div>
    </div>
    <div class="pages">
      <div class="dev"><svg viewBox="0 0 20 18"><path d="M1 2h18v10H1zM10 12v4M6 16h8" fill="none" stroke="#605e5c" stroke-width="1.300"/></svg></div>
      <svg class="phone" viewBox="0 0 14 20"><rect x="1" y="1" width="12" height="18" rx="1" fill="none" stroke="#605e5c" stroke-width="1.300"/><path d="M6 16h2" stroke="#605e5c"/></svg>
      <svg class="tris" viewBox="0 0 26 8"><path d="M5 0v8L1 4zM21 0v8l4-4z" fill="#c8c6c4"/></svg>
      <span class="pt p1">Page 1</span><span class="pt p2">Table page</span><span class="pt p3">Page 2</span><span class="pt p4 cur">Page 3</span><span class="pt p5">Page 4</span><span class="plus"><svg viewBox="0 0 10 10"><path d="M5 0v10M0 5h10" stroke="#fff" stroke-width="2"/></svg></span>
    </div>
  </div>

  <aside class="filters"><div><svg class="dbl flip"><use href="#dbl"/></svg><svg class="fi" viewBox="0 0 14 14"><path d="M13 1.500v11L8.500 8.500H2v-3h6.500z" fill="none" stroke="#3b3a39" stroke-width="1.200"/></svg><span>Filters</span></div></aside>

  <aside class="build">
    <header><h2>Build</h2><svg class="dots"><use href="#dots"/></svg><svg class="dbl"><use href="#dbl"/></svg></header>
    <div class="bbody">
      <h5 class="sg">Suggestions</h5>
      <div class="vis">
        <i><svg><use href="#stackbar"/></svg></i><i><svg><use href="#stackcol"/></svg></i><i><svg><use href="#clubar2"/></svg></i><i><svg><use href="#clucol2"/></svg></i><i><svg><use href="#hbar"/></svg></i><i><svg><use href="#hcol"/></svg></i>
        <i><svg><use href="#line"/></svg></i><i><svg><use href="#area"/></svg></i><i><svg><use href="#sarea"/></svg></i><i><svg><use href="#farea"/></svg></i><i><svg><use href="#combo"/></svg></i><i><svg><use href="#combo2"/></svg></i>
        <i><svg><use href="#ribbon"/></svg></i><i><svg><use href="#wfall"/></svg></i><i><svg><use href="#funnel"/></svg></i><i><svg><use href="#scatter"/></svg></i><i class="sel"><svg><use href="#pie"/></svg></i><i><svg><use href="#donut"/></svg></i>
        <i><svg><use href="#tree"/></svg></i><i><svg><use href="#globe"/></svg></i><i><svg><use href="#map"/></svg></i><i><svg><use href="#arrow"/></svg></i><i><svg><use href="#gauge"/></svg></i><i><svg viewBox="0 0 18 18"><use href="#frame"/><text x="9" y="12.500" text-anchor="middle" font-size="9" class="t123">123</text></svg></i>
        <i><svg><use href="#mrow"/></svg></i><i><svg><use href="#kpi"/></svg></i><i><svg><use href="#slicer"/></svg></i><i><svg><use href="#table"/></svg></i><i><svg><use href="#matrix"/></svg></i><i><svg viewBox="0 0 18 18"><text x="8" y="14.500" text-anchor="middle" font-size="16" font-weight="700" class="t123">R</text></svg></i>
        <i><svg viewBox="0 0 18 18"><text x="9" y="13.500" text-anchor="middle" font-size="15.500" font-weight="700" class="t123">Py</text></svg></i><i><svg><use href="#infl"/></svg></i><i><svg><use href="#decomp"/></svg></i><i><svg><use href="#qa"/></svg></i><i><svg><use href="#narr"/></svg></i><i><svg><use href="#trophy"/></svg></i>
        <i><svg><use href="#report"/></svg></i><i><svg viewBox="0 0 18 18"><use href="#frame"/><text x="10.500" y="12.500" text-anchor="middle" font-size="9" class="t123">123</text><use href="#bolt" x="-1" y="-2" width="8" height="12"/></svg></i><i><svg><use href="#slicer-n"/></svg></i><i><svg><use href="#dots"/></svg></i>
      </div>
      <h5>Legend</h5>
      <div class="well"><div class="fld"><span>Gender</span><svg viewBox="0 0 42 14"><path d="M2 1.500l11 11M13 1.500l-11 11M22.500 0v14M33 1.500l5.500 5.500L33 12.500" fill="none" stroke="#252423"/></svg></div><div class="add">+Add data</div></div>
      <h5>Values</h5>
      <div class="well"><div class="fld"><span>Sum of Attritio...</span><svg viewBox="0 0 42 14"><path d="M2 1.500l11 11M13 1.500l-11 11M22.500 0v14M33 1.500l5.500 5.500L33 12.500" fill="none" stroke="#252423"/></svg></div><div class="add">+Add data</div></div>
      <h5>Details</h5>
      <div class="well"><div class="add">+Add data</div></div>
      <h5 class="tt">Tooltips</h5>
    </div>
    <div class="sb"></div>
  </aside>

  <aside class="datap">
    <header><h2>Data</h2><svg class="dots"><use href="#dots"/></svg><svg class="dbl"><use href="#dbl"/></svg></header>
    <div class="dsearch"><svg viewBox="0 0 18 18"><g transform="matrix(-1 0 0 1 18 0)"><use href="#glass"/></g></svg>Search</div>
    <div class="dl">
      <ul>
        <li><svg class="ch"><use href="#chev"/></svg><svg class="tb"><use href="#tbl"/></svg>April Loan</li>
        <li><svg class="ch"><use href="#chev"/></svg><svg class="tb"><use href="#tbl"/></svg>Columinar Data</li>
        <li><svg class="ch"><use href="#chev"/></svg><svg class="tb"><use href="#tbl"/></svg>Column6 - Copy</li>
        <li><svg class="ch"><use href="#chev"/></svg><svg class="tb"><use href="#tbl"/></svg>Data</li>
        <li><svg class="ch"><use href="#chev"/></svg><svg class="tb"><use href="#tbl"/></svg>Date Table</li>
        <li><svg class="ch"><use href="#chev"/></svg><svg class="tb"><use href="#tbl"/></svg>HR data<svg class="ok" viewBox="0 0 12 12"><circle cx="6" cy="6" r="6" fill="#117865"/><path d="M3.500 6l2 2 3.500-3.500" fill="none" stroke="#fff" stroke-width="1.200"/></svg></li>
        <li><svg class="ch"><use href="#chev"/></svg><svg class="tb"><use href="#tbl"/></svg>June Loan</li>
        <li><svg class="ch"><use href="#chev"/></svg><svg class="tb"><use href="#tbl"/></svg>LITA CLASS DATA</li>
        <li><svg class="ch"><use href="#chev"/></svg><svg class="tb"><use href="#tbl"/></svg>LITA Combined Data</li>
        <li><svg class="ch"><use href="#chev"/></svg><svg class="tb"><use href="#tbl"/></svg>LITA TABLE 2</li>
        <li><svg class="ch"><use href="#chev"/></svg><svg class="tb"><use href="#tbl"/></svg>Map Data</li>
        <li><svg class="ch"><use href="#chev"/></svg><svg class="tb"><use href="#tbl"/></svg>May Deposit</li>
        <li><svg class="ch"><use href="#chev"/></svg><svg class="tb"><use href="#tbl"/></svg>May Loan</li>
        <li><svg class="ch"><use href="#chev"/></svg><svg class="tb"><use href="#tbl"/></svg>Monthly Loan Data</li>
        <li><svg class="ch"><use href="#chev"/></svg><svg class="tb"><use href="#tbl"/></svg>Monthly Loan Summ...</li>
        <li><svg class="ch"><use href="#chev"/></svg><svg class="tb"><use href="#tbl"/></svg>Name Data</li>
        <li><svg class="ch"><use href="#chev"/></svg><svg class="tb"><use href="#tbl"/></svg>Sheet1</li>
        <li><svg class="ch"><use href="#chev"/></svg><svg class="tb"><use href="#tbl"/></svg>Text - Cleaning (1)</li>
        <li><svg class="ch"><use href="#chev"/></svg><svg class="tb"><use href="#tbl"/></svg>Text - Cleaning (2)</li>
      </ul>
      <div class="dsb"></div>
    </div>
  </aside>

  <aside class="rrail">
    <div class="act"><svg viewBox="0 0 20 20"><path d="M3.500 4v12c0 3 12 3 12 0V4" fill="#fff" stroke="#3b3a39" stroke-width="1.200"/><ellipse cx="9.500" cy="4" rx="6" ry="2.200" fill="#fff" stroke="#3b3a39" stroke-width="1.200"/></svg></div>
    <div class="act"><svg viewBox="0 0 20 20"><path d="M9 17.500H2v-10h4.500M6.500 17V1.500H11V9M11 5.500h5V9" fill="none" stroke="#3b3a39" stroke-width="1.200"/><path d="M11 11v6c1 2 7 2 8 0v-6" fill="#fff" stroke="#d4701c" stroke-width="1.300"/><ellipse cx="15" cy="11" rx="4" ry="1.500" fill="#fff" stroke="#d4701c" stroke-width="1.200"/></svg></div>
    <div><svg viewBox="0 0 20 20"><path d="M6 15.500H2v-9h4.500M6.500 13V1.500H11V9M11 4.500h4" fill="none" stroke="#3b3a39" stroke-width="1.300"/><path d="M19 6l-7 8-2-1 8-8z" fill="#fff" stroke="#3b3a39"/><path d="M5 18c3 0 2-4 5-4l2 2c0 3-5 4-7 2z" fill="#5aa9e0" stroke="#1067b0"/></svg></div>
    <div><svg viewBox="0 0 20 20"><path d="M9.500 1v17M1 9.500h17" stroke="#252423" stroke-width="1.200"/></svg></div>
    <div class="gear"><svg viewBox="0 0 20 20"><path d="M8 1h4l.7 2.800 1.600.9 2.700-.9 2 3.500-2 2v1.400l2 2-2 3.500-2.700-.9-1.600.9L12 19H8l-.7-2.800-1.600-.9-2.700.9-2-3.500 2-2V9.300l-2-2 2-3.500 2.700.9 1.600-.9z" fill="none" stroke="#3b3a39" stroke-width="1.300"/><circle cx="10" cy="10" r="3" fill="none" stroke="#3b3a39" stroke-width="1.300"/></svg></div>
  </aside>
</main>

<footer class="status"><span>Page 4 of 5</span><svg class="slider" viewBox="0 0 122 12"><path d="M0 6h4M8 6h100M58.500 3.500v5M114 6h8M118 2v8" stroke="#605e5c" stroke-width="1.200"/><path d="M41 1v10" stroke="#3b3a39" stroke-width="3"/></svg><span class="pct">69%</span><svg class="fit" viewBox="0 0 16 12"><path d="M.5.500h15v11H.5z" fill="none" stroke="#605e5c"/><path d="M3 5V3h2.500M10.500 3H13v2M3 7v2h2.500M10.500 9H13V7" fill="none" stroke="#2f8f4e"/></svg></footer>

<div class="taskbar">
  <div class="start"><svg viewBox="0 0 16 16"><path d="M0 2.200l6.500-.9v6.200H0zM7.300 1.200L16 0v7.500H7.300zM0 8.300h6.500v6.200L0 13.600zM7.300 8.300H16V16l-8.700-1.200z" fill="#fff"/></svg></div>
  <div class="tsearch"><svg viewBox="0 0 18 18"><use href="#glass"/></svg><span>Type here to search</span></div>
  <div class="tv"><svg viewBox="0 0 18 16"><path d="M1 1v3h10V1M1 15v-3h10v3M1 6h10v4H1zM15.500 0v16M14 5h3v4h-3" fill="none" stroke="#fff" stroke-width="1.200"/></svg></div>
  <div class="app"><svg viewBox="0 0 24 24"><circle cx="12" cy="12" r="11.500" fill="url(#edge)"/><path d="M.5 11C2 3 8 .5 12 .5c7 0 11.500 5 11.500 9.500 0 4-3 6-6 6-4 0-3-2-2.500-3C16 9 12 7 9 7 5 7 1.500 9 .5 11z" fill="url(#edgeT)"/><path d="M9.500 12c-1 5 3 9 9 8-4 4-11 3-13-2-1-4 1-7 4-8z" fill="#1149a0"/><path d="M15 13c1-3-1-5-3-5-3 0-3 4-2 7 2 4 7 4 11 2-4 1-7-1-6-4z" fill="#2a2627"/></svg></div>
  <div class="app"><svg viewBox="0 0 24 24"><path d="M2 3h8l2 3h10v14H2z" fill="#e8a520"/><path d="M2 8h20v12H2z" fill="#ffd766"/><path d="M6 21v-8h12v8h-4v-4h-4v4z" fill="#2f8de0"/></svg></div>
  <div class="app"><svg viewBox="0 0 24 24"><path d="M7 6V3c0-2 10-2 10 0v3" fill="none" stroke="#28a8ea" stroke-width="1.800"/><path d="M1 6h22v15c0 1-1 2-2 2H3c-1 0-2-1-2-2z" fill="#fff"/><path d="M7 9.500h4.500V14H7z" fill="#f25022"/><path d="M12.500 9.500H17V14h-4.500z" fill="#7fba00"/><path d="M7 15h4.500v4.500H7z" fill="#00a4ef"/><path d="M12.500 15H17v4.500h-4.500z" fill="#ffb900"/></svg></div>
  <div class="app"><svg viewBox="0 0 24 24"><path d="M0 9L12 1l12 8v13H0z" fill="#1467b8"/><path d="M2 9h20l-10 8z" fill="#fff"/><path d="M0 9l12 8 12-8v13H0z" fill="#2f9df0"/><path d="M24 9v13H5z" fill="#50b8f8"/></svg></div>
  <div class="app"><svg viewBox="0 0 24 24"><circle cx="12" cy="12" r="11.500" fill="#fbc116"/><path d="M12 12L2 6.300A11.500 11.500 0 0 1 22 6.300H12z" fill="#e33b2e"/><path d="M2 6.300A11.500 11.500 0 0 0 11.500 23.500L16.900 14.800 12 12 7 15z" fill="#2da94f"/><circle cx="12" cy="12" r="5.800" fill="#fff"/><circle cx="12" cy="12" r="4.500" fill="#3b7ded"/></svg></div>
  <div class="app"><svg viewBox="0 0 24 24"><circle cx="12" cy="12" r="12" fill="#0b5cff"/><text x="12" y="15.500" text-anchor="middle" font-size="11" font-weight="700" class="wt">zm</text></svg></div>
  <div class="app"><svg viewBox="0 0 24 24"><circle cx="12" cy="12" r="12" fill="#fc4a1a"/><path d="M4 7h16M5.500 7l4 10L12 10l2.500 7L19 7" fill="none" stroke="#fff" stroke-width="2.200"/></svg></div>
  <div class="app"><svg viewBox="0 0 24 24"><path d="M11 3h12v18H11z" fill="#fff" stroke="#2b579a"/><path d="M14 7h7M14 10h7M14 13h7M14 16h7" stroke="#2b579a" stroke-width="1.300"/><path d="M1 3l13-2v22L1 21z" fill="#2b579a"/><path d="M3.500 8l1.800 8L7.500 9l2 7 2-8.500" fill="none" stroke="#fff" stroke-width="1.400"/></svg></div>
  <div class="app run"><svg viewBox="0 0 24 24"><path d="M11 3h12v18H11z" fill="#fff" stroke="#217346"/><path d="M14 7h7M14 10h7M14 13h7M14 16h7M18 5v14" stroke="#217346" stroke-width="1.300"/><path d="M1 3l13-2v22L1 21z" fill="#217346"/><path d="M4.500 8l6 8.500M10.500 7.500l-6 8.500" fill="none" stroke="#fff" stroke-width="1.700"/></svg></div>
  <div class="app run front"><svg viewBox="0 0 24 24"><path d="M13 0h7v24h-7z" fill="#e6ad10"/><path d="M8 6h8v18H8z" fill="#f2c811"/><path d="M3 12h8v12H3z" fill="#ffe06a"/></svg></div>
  <div class="app"><svg viewBox="0 0 24 24"><rect x="0" y="3" width="24" height="18" rx="4" fill="#f00"/><path d="M9.500 8v8l6.500-4z" fill="#fff"/></svg></div>
  <div class="app"><svg viewBox="0 0 24 24"><circle cx="12" cy="12" r="11.500" fill="#fff"/><path d="M9 23v-3c-3 1-4-1-5-2 2 0 2 2 5 1 0-1 .5-1.500 1-2-4-.5-5.500-3-5.500-6 0-1.500.5-2.500 1.300-3.500-.3-1-.2-2.300.2-3.300 1.300 0 2.500.8 3.300 1.300 1.700-.5 3.700-.5 5.400 0 .8-.5 2-1.300 3.300-1.300.4 1 .5 2.300.2 3.300.8 1 1.300 2 1.300 3.500 0 3-1.500 5.500-5.500 6 .7.600 1 1.500 1 3v3z" fill="#242122"/></svg></div>
  <div class="app"><svg viewBox="0 0 24 24"><path d="M3 2.500c0-2 9-2 9 0V15c-2 2-7 2-9 0z" fill="#e8c520"/><ellipse cx="7.500" cy="2.700" rx="4.500" ry="1.700" fill="#f8e27a"/><path d="M15 2h6v6M21 16v6h-5M3 17v5h5" fill="none" stroke="#5fb33c" stroke-width="2"/><path d="M9 21l9-9M10 12l9 9" stroke="#9b4fc0" stroke-width="2"/></svg></div>
  <div class="weather"><svg viewBox="0 0 26 24"><path d="M5 23a5 5 0 0 1 0-10c1-6 9-7 11-2 5-1 8 3 7 6 1 3-1 6-4 6z" fill="#a9c8ef"/><path d="M5 23a5 5 0 0 1-1-9c8-2 10 5 18 4 0 3-1 5-3 5z" fill="#d5e4f7"/><circle cx="19" cy="6.500" r="6" fill="#c0392b"/><text x="19" y="10" text-anchor="middle" font-size="9" class="wt">1</text></svg><span>29°C</span></div>
  <svg class="tray" viewBox="0 0 112 20"><g fill="none" stroke="#fff" stroke-width="1.300"><path d="M1 13l5-5.500 5 5.500"/><rect x="26" y="5" width="7" height="10" rx="1"/><path d="M27 2.500h6M27 17.500h6M33 8.500l3-1.500v6l-3-1.500"/><path d="M53 7h9v8h-9zM64 10v2M48 4v4h5V4M49.500 2v2M51.500 2v2M50.500 8v7h2"/><circle cx="78" cy="10" r="7"/><path d="M71 10h14M78 3c-5 4-5 10 0 14M78 3c5 4 5 10 0 14"/><path d="M95 8h3l4-4v12l-4-4h-3zM104 7c1.500 2 1.500 4 0 6M106.500 5c3 3 3 7 0 10"/></g><path d="M54.500 8.500h6v5h-6z" fill="#fff"/><circle cx="83" cy="15" r="3.500" fill="#252122" stroke="#fff"/></svg>
  <div class="clock">12:59 PM<br>10/29/2024</div>
  <svg class="notif" viewBox="0 0 28 26"><path d="M1 1h16v12H8l-4 4v-4H1z" fill="#fff"/><path d="M4 4.500h10M4 7.500h10" stroke="#333"/><circle cx="16.500" cy="18" r="8.500" fill="#333" stroke="#999"/><text x="16.500" y="22" text-anchor="middle" font-size="11" class="wt">31</text></svg>
</div>
</body>
</html>
```
FILE: styles.css
```css
*{box-sizing:border-box}
body{margin:0;width:1366px;height:768px;overflow:hidden;display:flex;flex-direction:column;font-family:"Open Sans","Noto Sans",sans-serif;font-size:12px;color:#252423;background:#fff}
svg{display:block;flex:none;overflow:visible}
h2,h3,h4,h5,ul{margin:0;padding:0;font-weight:400}
i{font-style:normal}
.defs{position:absolute;width:0;height:0}
.b{fill:#83beec;stroke:#1067b0}
.g{fill:#c8c6c4;stroke:#797775}
.n{fill:none;stroke:#3b3a39;stroke-width:1.2}
.t123{fill:#1a7fc4;font-family:"Open Sans",sans-serif;letter-spacing:0}
.wt{fill:#fff;font-family:"Open Sans",sans-serif}
.dax{fill:#797775;font-family:"Liberation Sans",sans-serif}
.fx{fill:#3b3a39;font-family:"Liberation Serif",serif}

.titlebar{height:34px;flex:none;background:#3b3a39;color:#fff;display:flex;align-items:center}
.i-save{width:15px;height:15px;margin-left:17px}
.i-undo{width:14px;height:15px;margin-left:16px}
.i-redo{width:14px;height:15px;margin-left:16px}
.doc{margin-left:10px;width:254px;white-space:nowrap;letter-spacing:-.21px;padding-top:6px}
.i-tri{width:9px;height:5px;margin-left:5px}
.topsearch{margin-left:206px;width:400px;height:24px;background:#d2d0ce;border-radius:2px;color:#2c6257;display:flex;align-items:center;padding-left:17px;font-size:13.3px;letter-spacing:-.2px}
.topsearch svg{width:17px;height:17px;color:#3b3a39;margin-right:11px}
.signin{margin-left:176px;width:37px;letter-spacing:-.2px;white-space:nowrap}
.i-user{width:20px;height:20px;margin-left:10px}
.i-win{width:100px;height:12px;margin-left:31px}

.tabs{height:36px;flex:none;background:#fafafa;display:flex;font-size:13.3px;letter-spacing:-.2px}
.tab{height:31px;display:flex;align-items:center;justify-content:center;white-space:nowrap}
.file{width:66px}.home{width:38px;margin-left:15px;border-bottom:3px solid #117865;font-weight:600;padding-top:3px;letter-spacing:-.35px}
.insert{width:40px;margin-left:28px}.modeling{width:64px;margin-left:27px}.view{width:40px;margin-left:24px}.optimize{width:66px;margin-left:21px}.help{width:40px;margin-left:21px}
.ctx{background:#fff;color:#1d7365;font-weight:600}
.format{width:75px;margin-left:10px}.drill{width:100px;margin-left:4px;letter-spacing:.05px}
.share{margin:4px 6px 0 auto;width:84px;height:24px;border:0;border-radius:4px;background:#117865;color:#fff;display:flex;align-items:center;padding:0 0 0 7px;font:600 12px "Open Sans",sans-serif;letter-spacing:-.5px}
.i-share{width:16px;height:15px}.share span{width:31px;margin-left:8px;text-align:left}.i-sdn{width:10px;height:7px;margin-left:4px}

.ribbon{height:90px;flex:none;background:#fafafa;border-bottom:1px solid #d8d6d4;display:flex;position:relative;z-index:2;box-shadow:0 1px 3px rgba(0,0,0,.15);letter-spacing:-.3px;color:#3b3a39}
.group{height:88px;border-right:1px solid #d2d0ce;display:flex;flex-direction:column;flex:none}
.row{height:76px;display:flex;padding-top:7px}
.group label{font-size:10px;text-align:center;line-height:14px;letter-spacing:-.15px;padding-top:1px;margin-bottom:-3px}
.clip{width:81px;padding-left:3px}.clip label{padding-right:4px}
.data{width:309px;padding-left:3px}.data label{padding-right:4px}.queries{width:117px;padding-left:6px}.queries label,.ins label{padding-right:7px}
.ins{width:409px;padding-left:7px}.calc{width:177px;padding-left:8px}.calc label{padding-right:9px}.sens{width:74px}.pub{width:59px}.cop{width:60px}
.big{display:flex;flex-direction:column;align-items:center;text-align:center;line-height:16px;white-space:nowrap;flex:none}
.big span{margin-top:3px}
.ic{width:28px;height:30px}.ic.w30{width:30px}.ic.w32{width:32px}
.w40{width:40px}.w49{width:49px}.w50{width:50px}.w58{width:58px}.w60{width:60px}.w72{width:72px}
.off{color:#bebbb8}.off .dn{opacity:.5}
.dn{width:8px;height:8px;display:inline-block;margin-left:1px}
.minis{display:flex;flex-direction:column;gap:6px;margin:-4px 0 0 -1px}
.minis svg{width:16px;height:18px}
.links{display:flex;flex-direction:column;gap:6px;margin-top:-4px}
.links div{height:18px;display:flex;align-items:center;white-space:nowrap}
.links div>svg:first-child{width:16px;height:18px;margin-right:3px}
.links .dn{margin-left:4px}
.l1{width:134px}.l2 div>svg:first-child{margin-right:4px}
.gallery{width:254px;height:62px;margin-left:5px;border:1px solid #8a8886;background:#fff;display:flex}
.ggrid{width:238px;display:grid;grid-template-columns:repeat(9,26px);grid-template-rows:29px 29px;padding:1px 0 0 1px;border-right:1px solid #8a8886;flex:none}
.ggrid i,.vis i{display:flex;align-items:center;justify-content:center}
.ggrid svg{width:16px;height:16px;margin-top:-1px}
.ggrid .sel{background:#edebe9;border:1px solid #b3b0ad;margin:2px 1px 3px}
.gdn{flex:1;display:flex;align-items:center;justify-content:center}
.gdn .dn{margin-top:6px}
.tbx{margin-left:4px}
.collapse{width:10px;height:7px;margin:77px 0 0 67px}

.main{height:543px;flex:none;display:flex}
.rail{width:41px;background:#f3f2f1;border-right:1px solid #e1dfdd;flex:none}
.rail div{height:40px;display:flex;align-items:center;justify-content:center;border-left:3px solid transparent;padding-right:2px}
.rail .on{border-color:#117865}.rail svg{width:18px;height:18px}
.work{width:896px;flex:none;display:flex;flex-direction:column}
.canvas{height:508px;position:relative;background:#fff;overflow:hidden}
/* visuals are placed freely on the report canvas */
.v{position:absolute}
.page{position:absolute;left:3px;top:-6px;width:892px;height:507px;border:2px dotted #605e5c}
.kpi{background:#c8b8e6;border:1px solid #6f74c8;border-radius:20px;text-align:center;overflow:hidden}
.kpi.dark{border-color:#3b3a42}
.kpi h3{font:900 19px/25px Inter,"Liberation Sans",sans-serif;color:#e669b4;white-space:nowrap;letter-spacing:.05px}
.kpi.dark h3{color:#e044a7;letter-spacing:.25px}
.kpi b{display:block;font:400 43px/40px "Liberation Serif",serif;color:#252423;overflow:hidden}
.k1{left:4px;top:78px;width:186px;height:102px;padding-top:6px}.k1 b{height:31px;font-size:44px;line-height:38px;margin-top:4px;letter-spacing:.8px}
.k2{left:189px;top:77px;width:162px;height:120px;padding-top:5px}.k2 b{font-size:25px;line-height:26px;margin-top:3px;letter-spacing:.6px}
.k3{left:355px;top:76px;width:178px;height:116px;padding-top:6px}.k3 b{font-size:32px;line-height:30px;height:24px;letter-spacing:.8px}
.k4{left:532px;top:79px;width:150px;height:106px;padding-top:5px}.k4 b,.k5 b{margin-top:19px;height:50px}.k4 b{letter-spacing:.8px}
.k5{left:682px;top:79px;width:164px;height:106px;padding-top:5px}.k5 h3{padding-right:24px}
.title{left:21px;top:25px;width:336px;height:53px;border:1px solid #3b3a39;border-radius:18px;background:#e044a7;color:#fff;font:700 18px/19px "Liberation Serif",serif;letter-spacing:.42px;-webkit-text-stroke:.3px #fff;text-align:center;padding:9px 5px 0 0}
.title i{position:absolute;right:9px;top:9px;width:6px;height:31px;background:#c8c6c4}
.edu{left:373px;top:6px;width:318px;height:72px;background:#c8b8e6}
.eh{display:flex;justify-content:space-between;align-items:center;padding:0 8px 0 9px;height:14px;font-size:7px}
.eh svg{width:8px;height:6px}
.tiles{display:flex;gap:2px;padding-left:18px}
.tiles span{width:69px;height:53px;border:1px solid #979593;background:#fff;display:flex;align-items:center;justify-content:center;text-align:center;font-size:8.8px;line-height:12px;color:#605e5c;letter-spacing:-.1px}
.next{position:absolute;right:4px;top:35px;width:7px;height:12px}
.role{left:703px;top:16px;width:187px;height:77px;background:#fff;padding:8px 4px 0 7px}
.rh{display:flex;justify-content:space-between;align-items:center;height:25px;padding:0 1px 0 2px;font:700 18px "Liberation Serif",serif;letter-spacing:.2px}
.rh svg{width:13px;height:8px;margin-top:-4px}
.rs{height:25px;margin-top:3px;border:1px solid #edebe9;display:flex;justify-content:space-between;align-items:center;padding:1px 3px 0;font:18px "Liberation Serif",serif;color:#605e5c}
.rs span{margin-top:3px;letter-spacing:-.6px}
.rs svg{width:16px;height:9px}
.chart{background:#c8b8e6}
.chart h4{position:absolute;font:700 14px/17px Roboto,sans-serif;letter-spacing:.27px;white-space:nowrap;color:#252423}
.chart>svg{width:100%;height:100%}
.round{border-radius:20px;box-shadow:inset 0 0 0 1px #3b3a42}
.dept{left:4px;top:191px;width:174px;height:117px}.dept h4{left:4px;top:1px}
.field{left:187px;top:184px;width:167px;height:137px}.field h4{left:4px;top:1px}
.gender{left:356px;top:192px;width:177px;height:137px}
.a1{left:20px;top:353px;width:142px;height:147px}.a2{left:163px;top:374px;width:142px;height:126px}.a3{left:306px;top:374px;width:142px;height:124px}.a4{left:453px;top:374px;width:144px;height:124px}.a5{left:597px;top:372px;width:142px;height:126px}
.round h4{font-size:13px;line-height:16px;left:10.5px;top:7px;letter-spacing:.05px}
.gender h4{left:9.5px;top:6px}
.lab{fill:#6f6a80;font-family:"Open Sans",sans-serif}.dk{fill:#3f3a4c}.mid{text-anchor:middle}
.lgb{font:600 9px "Open Sans",sans-serif;fill:#4a4558}.lg{font:9px "Open Sans",sans-serif;fill:#4a4558}
.k{fill:#252423}.lgb.k{font-weight:700}
.ax{font:700 8.8px "Open Sans",sans-serif;text-anchor:end;fill:#252423}
.cat{font:9.5px "Liberation Serif",serif;text-anchor:end;fill:#605c70}
.old{font-family:"Liberation Serif",serif;fill:#252423}
.heading{left:223px;top:326px;font-size:14px;font-weight:700;line-height:20px;white-space:nowrap;letter-spacing:.36px}
.vtools{left:452px;top:167px;display:flex;gap:4px}
.vtools span{width:24px;height:23px;background:#fff;display:flex;align-items:center;justify-content:center}
.vtools svg{width:16px;height:16px}
.selbox{left:349px;top:185px;width:190px;height:150px}
.obj{left:541px;width:28px;height:28px;background:#e1dfdd;border:1px solid #cfcdcb;display:flex;align-items:center;justify-content:center;box-shadow:0 1px 3px rgba(0,0,0,.3)}
.obj svg{width:20px;height:20px}.o1{top:191px}.o2{top:231px}

.pages{height:35px;width:930px;background:#f3f2f1;display:flex;letter-spacing:-.3px}
.dev{width:24px;height:31px;margin-left:10px;border-bottom:3px solid #117865;display:flex;justify-content:center;padding-top:5px}
.dev svg{width:20px;height:18px}
.phone{width:14px;height:20px;margin:5px 0 0 25px}
.tris{width:26px;height:8px;margin:14px 7px 0 21px}
.pt{background:#fff;border-left:1px solid #d2d0ce;display:flex;align-items:center;justify-content:center;padding-top:2px}
.p1{width:78px}.p2{width:97px}.p3{width:76px}.p4{width:78px}.p5{width:76px}
.cur{border-bottom:4px solid #117865;padding-top:6px;text-shadow:.3px 0 #252423}
.plus{width:39px;background:#117865;display:flex;align-items:center;justify-content:center;padding-bottom:2px}
.plus svg{width:10px;height:10px}

.filters{width:34px;flex:none;height:508px;background:#fff;border-left:1px solid #e1dfdd}
.filters div{display:flex;flex-direction:column;align-items:center;padding:13px 0 0 2px}
.dbl{width:13px;height:13px}.flip{transform:scaleX(-1)}
.fi{width:13px;height:13px;margin:15px 0 8px 3px}
.filters span{writing-mode:vertical-rl;font-size:14px;font-weight:600;line-height:16px;letter-spacing:-.1px;margin-right:3px}
.build,.datap{background:#f3f2f1;border-left:1px solid #e1dfdd;flex:none;display:flex;flex-direction:column;position:relative}
.build{width:181px;padding-left:8px}
.build header,.datap header{display:flex;align-items:center;height:37px}
h2{font-size:15.5px;font-weight:700;letter-spacing:-.55px;flex:1;color:#252423}
.dots{width:16px;height:16px;margin-right:8px}
.build header{padding-right:8px}.datap header{padding:0 8px 0 8px}
.bbody{height:498px;overflow:hidden}
h5{font-size:12px;line-height:16px;letter-spacing:-.2px;color:#3b3a39}
.sg{margin:1px 0 3px}
.vis{width:164px;height:188px;border:1px solid #8a8886;border-radius:2px;background:#fff;display:grid;grid-template-columns:repeat(6,26px);grid-auto-rows:26px;padding:2px 3px;margin-bottom:9px}
.vis svg{width:18px;height:18px}
.vis .sel{border:1px solid #252423;margin:1px}
.well{width:164px;border:1px dashed #605e5c;padding:4px;margin:3px 0 9px;display:flex;flex-direction:column;gap:4px}
.well>div{height:30px;border:1px solid #605e5c;border-radius:2px;background:#fff;display:flex;align-items:center}
.well .fld{background:#f8f8f8;justify-content:space-between;padding:0 8px 0 6px;letter-spacing:-.25px;white-space:nowrap}
.fld svg{width:42px;height:14px}
.well .add{justify-content:center;letter-spacing:-.05px}
.tt{margin-top:-1px}
.sb{position:absolute;right:1px;top:37px;width:6px;height:452px;border-radius:3px;background:#d2d0ce}
.datap{width:181px}
.dsearch{width:172px;height:23px;margin:8px 0 0 4px;border:1px solid #c8c6c4;border-bottom-color:#605e5c;border-radius:4px;background:#fff;color:#605e5c;display:flex;align-items:center;padding-left:12px;font-size:12.6px}
.dsearch svg{width:14px;height:14px;margin-right:7px}
.dl{display:flex;padding-top:9px}
.dl ul{list-style:none;width:168px;padding-top:1px;flex:none}
.dl li{height:24px;display:flex;align-items:center;padding-left:15px;white-space:nowrap;letter-spacing:-.3px;color:#3b3a39;position:relative}
.ch{width:7px;height:12px;margin-right:7px}
.datap .tb{width:13px;height:13px;margin:0 5px 0 0}
.ok{position:absolute;left:35px;top:13px;width:12px;height:12px}
.dsb{width:8px;height:415px;background:#c8c8c8}
.rrail{width:33px;background:#faf9f8;border-left:1px solid #e1dfdd;display:flex;flex-direction:column;flex:none}
.rrail>div{height:32px;display:flex;align-items:center;justify-content:center;flex:none}
.rrail svg{width:19px;height:19px}
.rrail .act{background:#e1dfdd;border:1px solid #605e5c}
.rrail .gear{margin-top:auto;border-top:1px solid #d2d0ce}

.status{height:25px;flex:none;background:#f3f2f1;border-top:1px solid #e1dfdd;border-bottom:1px solid #111;display:flex;align-items:center;padding:2px 0 0 5px;letter-spacing:-.2px;color:#3b3a39;font-size:11.6px}
.status>span:first-child{width:1150px}
.slider{width:122px;height:12px}.pct{width:24px;margin-left:13px}.fit{width:16px;height:12px;margin-left:18px}

.taskbar{height:40px;flex:none;background:linear-gradient(90deg,#2a2725,#22252e 30%,#2c2122 45%,#2a2324 65%,#242224);color:#fff;display:flex;align-items:center}
.start{width:48px;display:flex;justify-content:center}.start svg{width:16px;height:16px}
.tsearch{width:288px;height:40px;background:#f2f2f2;border:1px solid #c8c6c4;color:#3b3a39;display:flex;align-items:center;padding-left:12px;font-size:14px;letter-spacing:-.05px}
.tsearch svg{width:16px;height:16px;margin-right:11px}
.tv{width:50px;display:flex;justify-content:center}.tv svg{width:18px;height:16px}
.app{width:49px;height:40px;display:flex;align-items:center;justify-content:center;flex:none}
.app svg{width:24px;height:24px}
.run{box-shadow:inset 0 -2px #76b9ed}
.front{background:#5a5556}
.weather{margin-left:24px;width:62px;display:flex;align-items:center;gap:7px;font-size:13px;letter-spacing:-.2px}
.weather svg{width:26px;height:24px}
.tray{width:112px;height:20px;margin-left:26px}
.clock{width:70px;margin-left:3px;text-align:center;font-size:11.6px;line-height:18px;letter-spacing:-.3px;margin-top:-2px}
.notif{width:28px;height:26px;margin-left:4px}
```
